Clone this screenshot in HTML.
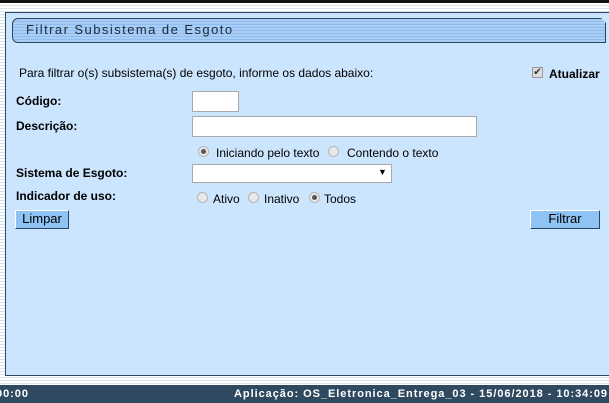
<!DOCTYPE html>
<html><head><style>
body{margin:0;width:609px;height:403px;overflow:hidden;position:relative;font-family:"Liberation Sans",Arial,sans-serif;font-size:12px;color:#000;
background:repeating-linear-gradient(#fff 0 2px,#d6e4ee 2px 3px);}
.a{position:absolute;white-space:nowrap}
.top{left:0;top:0;width:609px;height:3px;background:#111}
.panel{left:5px;top:12px;width:610px;height:362px;background:#cce5fe;border:1px solid #2c4660;border-right:none}
.tab{left:12px;top:18px;width:592px;height:23px;border:1px solid #2c4660;border-radius:6px 0 0 6px;
background:repeating-linear-gradient(#a9cdf5 0 2px,#8fbdf0 2px 3px);clip-path:polygon(0 0,calc(100% - 5px) 0,100% 5px,100% 100%,0 100%)}
.tt{left:26px;top:22px;font-size:13px;letter-spacing:1.45px;color:#1a2a3a}
b{font-weight:bold}
.in{position:absolute;background:#fff;border:1px solid #a9a9a9;box-sizing:border-box}
.rad{position:absolute;width:11px;height:11px;border-radius:50%;background:#e8e8e8;border:1px solid #b5b5b5;box-sizing:border-box}
.rad.on::after{content:"";position:absolute;left:2px;top:2px;width:5px;height:5px;border-radius:50%;background:#555}
.btn{position:absolute;background:#8ec3f3;border:1px solid #2c4660;border-left-color:#fff;border-top-color:#fff;box-sizing:border-box;text-align:center;font-size:13px;line-height:16px}
.foot{left:0;top:385px;width:609px;height:18px;background:#2f4a60;color:#fff;font-weight:bold;font-size:11px;letter-spacing:0.95px;line-height:18px}
</style></head><body>
<div class="a top"></div>
<div class="a panel"></div>
<div class="a tab"></div>
<div class="a tt">Filtrar Subsistema de Esgoto</div>
<div class="a" style="left:19px;top:66px">Para filtrar o(s) subsistema(s) de esgoto, informe os dados abaixo:</div>
<div class="a" style="left:532px;top:67px;width:11px;height:11px;background:#ddd;border:1px solid #999;box-sizing:border-box;font-size:10px;line-height:9px;text-align:center;color:#333">✔</div>
<div class="a" style="left:549px;top:67px;font-weight:bold;font-size:12px">Atualizar</div>
<div class="a" style="left:16px;top:94px;font-weight:bold">Código:</div>
<div class="in" style="left:192px;top:91px;width:47px;height:21px"></div>
<div class="a" style="left:16px;top:119px;font-weight:bold">Descrição:</div>
<div class="in" style="left:192px;top:116px;width:285px;height:21px"></div>
<div class="rad on" style="left:198px;top:146px"></div>
<div class="a" style="left:216px;top:146px">Iniciando pelo texto</div>
<div class="rad" style="left:328px;top:146px"></div>
<div class="a" style="left:347px;top:146px">Contendo o texto</div>
<div class="a" style="left:16px;top:166px;font-weight:bold">Sistema de Esgoto:</div>
<div class="in" style="left:192px;top:164px;width:200px;height:19px"></div>
<div class="a" style="left:378px;top:167px;font-size:9px">▼</div>
<div class="a" style="left:16px;top:189px;font-weight:bold">Indicador de uso:</div>
<div class="rad" style="left:197px;top:192px"></div>
<div class="a" style="left:213px;top:192px">Ativo</div>
<div class="rad" style="left:248px;top:192px"></div>
<div class="a" style="left:264px;top:192px">Inativo</div>
<div class="rad on" style="left:309px;top:192px"></div>
<div class="a" style="left:324px;top:192px">Todos</div>
<div class="btn" style="left:15px;top:210px;width:54px;height:19px">Limpar</div>
<div class="btn" style="left:530px;top:210px;width:70px;height:19px">Filtrar</div>
<div class="a foot"><span style="position:absolute;left:-4px">00:00</span><span style="position:absolute;right:1px">Aplicação: OS_Eletronica_Entrega_03 - 15/06/2018 - 10:34:09</span></div>
</body></html>
